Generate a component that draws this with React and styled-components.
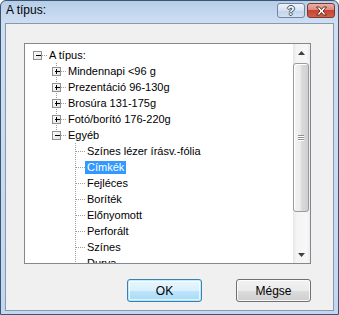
import React from "react";
import styled, { createGlobalStyle } from "styled-components";

const GlobalStyle = createGlobalStyle`
  html, body {
    margin: 0;
    padding: 0;
    background: #ffffff;
  }

  body {
    font-family: "Liberation Sans", Arial, sans-serif;
  }
`;

const ROW_HEIGHT = 16;
const INDENT = 19;

const items = [
  { label: "A típus:", level: 0, expander: "minus", last: true },
  { label: "Mindennapi <96 g", level: 1, expander: "plus" },
  { label: "Prezentáció 96-130g", level: 1, expander: "plus" },
  { label: "Brosúra 131-175g", level: 1, expander: "plus" },
  { label: "Fotó/borító 176-220g", level: 1, expander: "plus" },
  { label: "Egyéb", level: 1, expander: "minus", last: true },
  { label: "Színes lézer írásv.-fólia", level: 2 },
  { label: "Címkék", level: 2, selected: true },
  { label: "Fejléces", level: 2 },
  { label: "Boríték", level: 2 },
  { label: "Előnyomott", level: 2 },
  { label: "Perforált", level: 2 },
  { label: "Színes", level: 2 },
  { label: "Durva", level: 2 },
];

const centerOf = (level) => 12 + INDENT * level;

// which ancestor levels still need a vertical guide through this row
function guidesFor(index) {
  const { level } = items[index];
  const guides = [];

  for (let k = 1; k < level; k++) {
    for (let j = index - 1; j >= 0; j--) {
      if (items[j].level === k) {
        if (!items[j].last) guides.push(k);
        break;
      }
    }
  }

  return guides;
}

function TreeLines({ item, index }) {
  const cx = centerOf(item.level);
  const width = cx + 10;
  const dot = { stroke: "#a0a0a0", strokeDasharray: "1 1" };

  return (
    <svg width={width} height={ROW_HEIGHT} shapeRendering="crispEdges">
      {guidesFor(index).map((k) => (
        <line key={k} x1={centerOf(k) + 0.5} x2={centerOf(k) + 0.5} y1={0} y2={16} {...dot} />
      ))}
      {item.level > 0 && (
        <line x1={cx + 0.5} x2={cx + 0.5} y1={0} y2={item.last ? 9 : 16} {...dot} />
      )}
      <line x1={cx + 1} x2={cx + 10} y1={8.5} y2={8.5} {...dot} />
      {item.expander && (
        <g>
          <defs>
            <linearGradient id={`box${index}`} x1="0" y1="0" x2="1" y2="1">
              <stop offset="0" stopColor="#ffffff" />
              <stop offset="1" stopColor="#e0e0e0" />
            </linearGradient>
          </defs>
          <rect x={cx - 3.5} y={4.5} width={8} height={8} fill={`url(#box${index})`} stroke="#919191" />
          <line x1={cx - 1} x2={cx + 4} y1={8.5} y2={8.5} stroke="#000000" />
          {item.expander === "plus" && (
            <line x1={cx + 0.5} x2={cx + 0.5} y1={6} y2={11} stroke="#000000" />
          )}
        </g>
      )}
    </svg>
  );
}

function App() {
  return (
    <>
      <GlobalStyle />
      <Window>
        <TitleBar>
          <Title>A típus:</Title>
          <CaptionButtons>
            <HelpButton>?</HelpButton>
            <CloseButton>
              <svg width="13" height="10" viewBox="0 0 13 10">
                <path
                  d="M1.5 1h3l2 2.5L8.5 1h3L8 5l3.5 4h-3l-2-2.5L4.5 9h-3L5 5z"
                  fill="#ffffff"
                  stroke="#5a1d15"
                  strokeWidth="0.9"
                  strokeLinejoin="round"
                />
              </svg>
            </CloseButton>
          </CaptionButtons>
        </TitleBar>

        <Client>
          <TreeBox>
            <TreeList>
              {items.map((item, index) => (
                <TreeRow key={item.label + index}>
                  <TreeLines item={item} index={index} />
                  <Label $selected={item.selected}>{item.label}</Label>
                </TreeRow>
              ))}
            </TreeList>

            <ScrollBar>
              <ArrowButton>
                <svg width="7" height="4" viewBox="0 0 7 4">
                  <path d="M3.5 0L7 4H0z" fill="#404040" />
                </svg>
              </ArrowButton>
              <Track>
                <Thumb>
                  <Grip>
                    <span />
                    <span />
                    <span />
                  </Grip>
                </Thumb>
              </Track>
              <ArrowButton>
                <svg width="7" height="4" viewBox="0 0 7 4">
                  <path d="M0 0h7L3.5 4z" fill="#404040" />
                </svg>
              </ArrowButton>
            </ScrollBar>
          </TreeBox>

          <ButtonRow>
            <DialogButton $isDefault>OK</DialogButton>
            <DialogButton>Mégse</DialogButton>
          </ButtonRow>
        </Client>
      </Window>
    </>
  );
}

const Window = styled.div`
  width: 339px;
  height: 315px;
  box-sizing: border-box;
  display: flex;
  flex-direction: column;
  border: 1px solid #3d5473;
  border-radius: 6px 6px 0 0;
  background: linear-gradient(180deg, #b6cde9 0px, #cfdff1 22px, #c3d7ef 100%);
  overflow: hidden;
`;

const TitleBar = styled.div`
  height: 22px;
  flex: none;
  display: flex;
  align-items: center;
  justify-content: space-between;
  padding: 0 3px 0 5px;
`;

const Title = styled.span`
  font-size: 12px;
  color: #000000;
  margin-top: -4px;
`;

const CaptionButtons = styled.div`
  display: flex;
  gap: 2px;
  align-self: flex-start;
  margin-top: 2px;
`;

const CaptionButton = styled.div`
  width: 28px;
  height: 15px;
  box-sizing: border-box;
  display: flex;
  align-items: center;
  justify-content: center;
  border-radius: 3px;
`;

const HelpButton = styled(CaptionButton)`
  border: 1px solid #6f86a5;
  background: linear-gradient(180deg, #eef3fa 0%, #d6e2f1 50%, #c3d4ea 51%, #d3e0f0 100%);
  font-size: 12px;
  font-weight: bold;
  color: #ffffff;
  text-shadow: 1px 0 0 #3b4d66, -1px 0 0 #3b4d66, 0 1px 0 #3b4d66, 0 -1px 0 #3b4d66;
`;

const CloseButton = styled(CaptionButton)`
  border: 1px solid #7b3a31;
  background: linear-gradient(180deg, #eab0a4 0%, #dd8a7c 45%, #c7442f 50%, #d0614d 100%);
`;

const Client = styled.div`
  flex: 1;
  margin: 0 4px 3px 4px;
  border: 1px solid #8598b4;
  background: #f0f0f0;
  padding: 19px 0 0 18px;
  display: flex;
  flex-direction: column;
`;

const TreeBox = styled.div`
  width: 287px;
  height: 221px;
  box-sizing: border-box;
  border: 1px solid #828790;
  background: #ffffff;
  display: flex;
`;

const TreeList = styled.div`
  flex: 1;
  overflow: hidden;
  padding-top: 3px;
`;

const TreeRow = styled.div`
  height: ${ROW_HEIGHT}px;
  display: flex;
  align-items: center;
  white-space: nowrap;
`;

const Label = styled.span`
  font-size: 11px;
  line-height: 13px;
  height: 13px;
  padding: 0 2px;
  color: ${(p) => (p.$selected ? "#ffffff" : "#000000")};
  background: ${(p) => (p.$selected ? "#3399ff" : "transparent")};
`;

const ScrollBar = styled.div`
  width: 17px;
  flex: none;
  display: flex;
  flex-direction: column;
  background: linear-gradient(90deg, #e6e6e6 0%, #f4f4f4 20%, #f7f7f7 80%, #ececec 100%);
`;

const ArrowButton = styled.div`
  height: 17px;
  flex: none;
  display: flex;
  align-items: center;
  justify-content: center;
`;

const Track = styled.div`
  flex: 1;
  padding: 2px 1px 0 0;
`;

const Thumb = styled.div`
  height: 149px;
  box-sizing: border-box;
  border: 1px solid #9b9b9b;
  border-radius: 3px;
  background: linear-gradient(90deg, #f4f4f4 0%, #ebebeb 45%, #dadada 55%, #d0d0d0 100%);
  box-shadow: inset 1px 1px 0 #ffffff;
  display: flex;
  align-items: center;
  justify-content: center;
`;

const Grip = styled.div`
  display: flex;
  flex-direction: column;
  gap: 1px;

  span {
    display: block;
    width: 6px;
    height: 1px;
    background: #8f8f8f;
    box-shadow: 0 1px 0 #ffffff;
  }
`;

const ButtonRow = styled.div`
  width: 287px;
  display: flex;
  justify-content: flex-end;
  gap: 34px;
  margin-top: 15px;
`;

const DialogButton = styled.div`
  width: 75px;
  height: 23px;
  box-sizing: border-box;
  display: flex;
  align-items: center;
  justify-content: center;
  border-radius: 3px;
  font-size: 12px;
  color: #000000;
  border: 1px solid ${(p) => (p.$isDefault ? "#3c7fb1" : "#707070")};
  background: ${(p) =>
    p.$isDefault
      ? "linear-gradient(180deg, #eaf6fd 0%, #d9f0fc 50%, #bee6fd 50%, #a7d9f5 100%)"
      : "linear-gradient(180deg, #f2f2f2 0%, #ebebeb 50%, #dddddd 50%, #cfcfcf 100%)"};
  box-shadow: ${(p) =>
    p.$isDefault
      ? "inset 0 0 0 1px #48d1fd55, inset 0 0 0 2px #ffffffaa"
      : "inset 0 0 0 1px #ffffffcc"};
`;

export default App;
